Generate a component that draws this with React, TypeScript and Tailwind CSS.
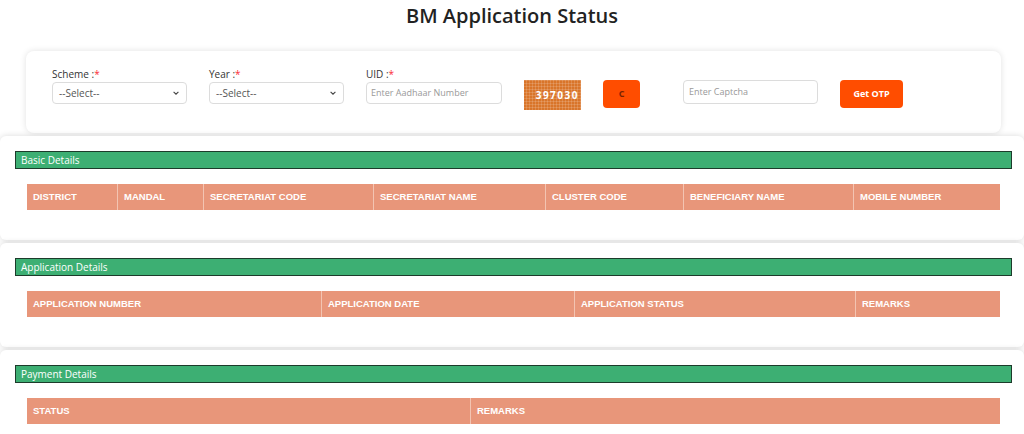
const f = { fontFamily: '"Open Sans", sans-serif' };

function Section({ title, cols }: { title: string; cols: [string, number][] }) {
  return (
    <div className="mt-[3px] h-[104px] rounded-md bg-white pt-[15px] shadow-[0_0_6px_rgba(0,0,0,0.15)]">
      <div className="ml-[15px] mr-[12px] flex h-[18px] items-center border border-[#1d3b2b] bg-[#3daf73] px-[5px] text-[10px] text-white">
        {title}
      </div>
      <div className="ml-[27px] mr-[24px] mt-[15px] flex h-[26px] bg-[#e8967a]">
        {cols.map(([c, w], i) => (
          <div
            key={c}
            style={{ width: w, fontFamily: '"Liberation Sans", Arial, sans-serif' }}
            className={`flex items-center px-[6px] text-[9.5px] font-bold text-white ${i ? "border-l border-[#f3c4b2]" : ""}`}
          >
            {c}
          </div>
        ))}
      </div>
    </div>
  );
}

function Sel({ x }: { x: string }) {
  return (
    <div className="flex h-[22px] w-[135px] items-center justify-between rounded-sm border border-[#dcdcdc] bg-white px-[6px] text-[10px] text-[#555]">
      {x}
      <svg width="8" height="8" viewBox="0 0 10 10"><path d="M2 3.5l3 3 3-3" stroke="#444" strokeWidth="1.4" fill="none" /></svg>
    </div>
  );
}

export default function App() {
  return (
    <div style={f} className="h-[434px] w-[1024px] overflow-hidden bg-white">
      <h1 className="pt-[1px] text-center text-[20px] font-semibold text-[#222]">BM Application Status</h1>
      <div className="ml-[26px] mr-[23px] mt-[20px] flex h-[82px] items-start gap-[22px] rounded-lg bg-white pl-[26px] pt-[16px] shadow-[0_0_6px_rgba(0,0,0,0.12)]">
        <div>
          <div className="text-[10px] text-[#333]">Scheme :<span className="text-red-500">*</span></div>
          <Sel x="--Select--" />
        </div>
        <div>
          <div className="text-[10px] text-[#333]">Year :<span className="text-red-500">*</span></div>
          <Sel x="--Select--" />
        </div>
        <div>
          <div className="text-[10px] text-[#333]">UID :<span className="text-red-500">*</span></div>
          <div className="flex h-[22px] w-[136px] items-center rounded-sm border border-[#dcdcdc] px-[4px] text-[9px] text-[#999]">Enter Aadhaar Number</div>
        </div>
        <div className="mt-[13px] flex h-[30px] w-[57px] items-center justify-end bg-[#d9752a] bg-[repeating-linear-gradient(0deg,transparent_0_2px,rgba(255,255,255,0.15)_2px_3px),repeating-linear-gradient(90deg,transparent_0_2px,rgba(255,255,255,0.15)_2px_3px)] pr-[2px] text-[10px] font-bold tracking-[1.5px] text-white">397030</div>
        <div className="mt-[13px] flex h-[28px] w-[37px] items-center justify-center rounded-sm bg-[#ff4d00] text-[9px] font-bold text-[#7a2200]">C</div>
        <div className="ml-[21px] mt-[13px] flex h-[24px] w-[135px] items-center rounded-sm border border-[#dcdcdc] px-[5px] text-[9px] text-[#999]">Enter Captcha</div>
        <div className="mt-[13px] flex h-[28px] w-[63px] items-center justify-center rounded-sm bg-[#ff4d00] text-[9px] font-bold text-white">Get OTP</div>
      </div>
      <div className="mt-[3px]">
        <Section title="Basic Details" cols={[["DISTRICT", 90], ["MANDAL", 86], ["SECRETARIAT CODE", 170], ["SECRETARIAT NAME", 172], ["CLUSTER CODE", 138], ["BENEFICIARY NAME", 170], ["MOBILE NUMBER", 147]]} />
        <Section title="Application Details" cols={[["APPLICATION NUMBER", 294], ["APPLICATION DATE", 253], ["APPLICATION STATUS", 281], ["REMARKS", 145]]} />
        <Section title="Payment Details" cols={[["STATUS", 443], ["REMARKS", 530]]} />
      </div>
    </div>
  );
}
